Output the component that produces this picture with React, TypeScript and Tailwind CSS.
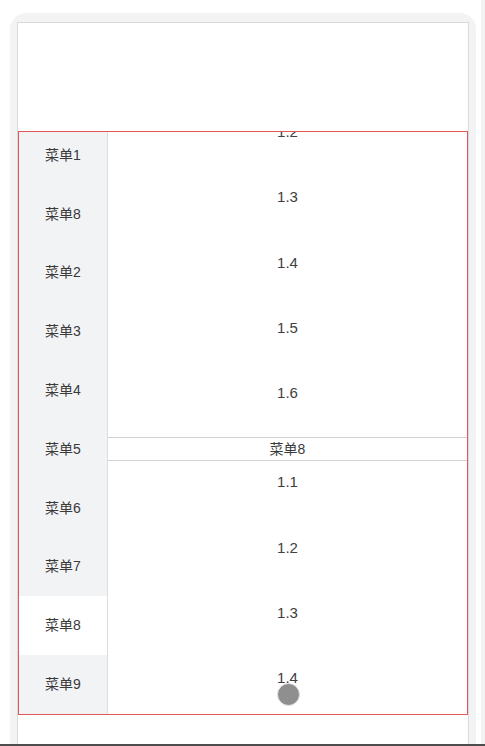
import React from 'react'

const menus = ['菜单1', '菜单8', '菜单2', '菜单3', '菜单4', '菜单5', '菜单6', '菜单7', '菜单8', '菜单9']
const activeIndex = 8

const font = { fontFamily: '"Liberation Sans", "Noto Sans CJK SC", sans-serif' }

function SubItem({ label }: { label: string }) {
  return <div className="h-[65.3px] pt-[11px] text-center text-[15px] leading-[20px] text-[#404040]">{label}</div>
}

export default function App() {
  return (
    <div className="relative flex h-[746px] w-[485px] flex-col overflow-hidden bg-white" style={font}>
      <div className="flex flex-1 flex-row">
        <div className="flex w-[481px] flex-col pl-[10px] pr-[5px] pt-[13px]">
          <div className="flex flex-1 flex-col rounded-t-[16px] bg-[#f3f3f4] px-[7px] pt-[9px]">
            <div className="flex flex-1 flex-col border border-b-0 border-[#dadada] bg-white">
              <div className="h-[108px]" />
              <div className="flex h-[584px] flex-row border border-[#e2575a]">
                {/* left menu */}
                <div className="w-[89px] overflow-hidden border-r border-[#dedede] bg-[#f2f3f5]">
                  <div className="-mt-[6px]">
                    {menus.map((m, i) => (
                      <div
                        key={i}
                        className={`flex h-[58.8px] items-center justify-center text-[14px] text-[#3a3a3a] ${i === activeIndex ? 'bg-white' : ''}`}
                      >
                        {m}
                      </div>
                    ))}
                  </div>
                </div>
                {/* right list */}
                <div className="flex-1 overflow-hidden bg-white">
                  <div className="-mt-[21px]">
                    {['1.2', '1.3', '1.4', '1.5', '1.6'].map((s) => (
                      <SubItem key={'a' + s} label={s} />
                    ))}
                    <div className="flex h-[24px] items-center justify-center border-y border-[#d2d2d2] text-[14px] text-[#3a3a3a]">
                      菜单8
                    </div>
                    {['1.1', '1.2', '1.3', '1.4', '1.5', '1.6'].map((s) => (
                      <SubItem key={'b' + s} label={s} />
                    ))}
                  </div>
                </div>
              </div>
            </div>
          </div>
        </div>
        <div className="w-[4px] bg-[#f2f2f2]" />
      </div>
      <div className="h-[2px] bg-[#4d4d4d]" />

      {/* touch cursor */}
      <div className="absolute left-[277px] top-[683px] h-[23px] w-[23px] rounded-full border border-[#e6e6e6] bg-[#8f8f8f]" />
    </div>
  )
}
